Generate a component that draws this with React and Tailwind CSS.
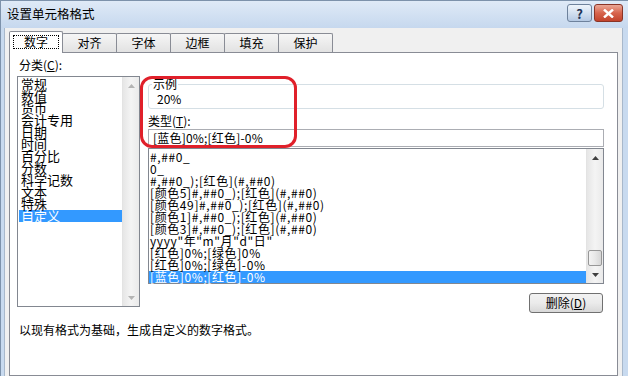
import React from 'react';

const categories = ['常规', '数值', '货币', '会计专用', '日期', '时间', '百分比', '分数', '科学记数', '文本', '特殊', '自定义'];

const formats = [
  '#,##0_',
  '0_',
  '#,##0_);[红色](#,##0)',
  '[颜色5]#,##0_);[红色](#,##0)',
  '[颜色49]#,##0_);[红色](#,##0)',
  '[颜色1]#,##0_);[红色](#,##0)',
  '[颜色3]#,##0_);[红色](#,##0)',
  'yyyy"年"m"月"d"日"',
  '[红色]0%;[绿色]0%',
  '[红色]0%;[绿色]-0%',
  '[蓝色]0%;[红色]-0%',
];

const tabs = ['数字', '对齐', '字体', '边框', '填充', '保护'];

function Arrow({ up, color }) {
  return (
    <svg width="7" height="4" viewBox="0 0 7 4">
      <path d={up ? 'M3.5 0L7 4H0z' : 'M0 0H7L3.5 4z'} fill={color} />
    </svg>
  );
}

// vertical scrollbar, thumb sits at the bottom of the track when given
function ScrollBar({ thumb, disabled }) {
  const c = disabled ? '#b4b4b4' : '#404040';
  return (
    <div className="w-[17px] flex flex-col bg-gradient-to-r from-[#e6e6e6] via-[#f4f4f4] to-[#eaeaea] border-l border-[#e3e3e3]">
      <div className="h-[17px] flex items-center justify-center">
        <Arrow up color={c} />
      </div>
      <div className="flex-1 flex flex-col justify-end px-[1px]">
        {thumb && (
          <div className="h-[16px] rounded-[2px] border border-[#979797] bg-gradient-to-r from-[#f3f3f3] via-[#e8e8e8] to-[#d6d6d6]" />
        )}
      </div>
      <div className="h-[17px] flex items-center justify-center">
        <Arrow color={c} />
      </div>
    </div>
  );
}

export default function App() {
  return (
    <div className="w-[628px] h-[376px] overflow-hidden flex flex-col bg-[#c8daef] font-['Noto_Sans_CJK_SC',sans-serif] text-[12px] text-black">
      {/* title bar */}
      <div className="h-[28px] flex items-start justify-between bg-gradient-to-b from-[#dfeaf7] to-[#c6d8ee] border-t border-l border-[#7d92ab]">
        <div className="pl-[6px] pt-[6px] leading-[14px] text-[12.5px]">设置单元格格式</div>
        <div className="flex gap-[2px] pt-[3px] pr-[5px]">
          <div className="w-[25px] h-[18px] rounded-[3px] border border-[#6e829c] bg-gradient-to-b from-[#eef4fb] via-[#d3e0f0] to-[#b5c9e3] flex items-center justify-center text-[#1d3456] font-bold text-[13px] leading-none">
            ?
          </div>
          <div className="w-[29px] h-[18px] rounded-[3px] border border-[#8a3426] bg-gradient-to-b from-[#eaa796] via-[#d7644d] to-[#c2432c] flex items-center justify-center">
            <svg width="11" height="9" viewBox="0 0 11 9">
              <path d="M1 0.5L10 8.5M10 0.5L1 8.5" stroke="#fff" strokeWidth="2.4" />
            </svg>
          </div>
        </div>
      </div>

      <div className="flex-1 flex border-l border-[#7d92ab]">
        <div className="w-[3px]" />
        {/* client area */}
        <div className="flex-1 bg-[#f0f0f0] border-l border-r border-[#a8b8cb] flex flex-col pl-[4px] pr-[4px] pt-[3px]">
          {/* tabs */}
          <div className="flex items-end h-[21px]">
            {tabs.map((t, i) =>
              i === 0 ? (
                <div key={t} className="w-[54px] bg-white border border-b-0 border-[#898c95] rounded-t-[2px] relative z-10 -mb-[1px] h-[22px] px-[3px] pt-[3px]">
                  <div className="h-[14px] border border-dotted border-black flex items-center justify-center leading-[12px]">{t}</div>
                </div>
              ) : (
                <div key={t} className="w-[55px] -ml-[1px] h-[19px] bg-gradient-to-b from-[#f6f6f6] to-[#e2e2e2] border border-b-0 border-[#898c95] rounded-t-[2px] flex items-center justify-center leading-[14px]">
                  {t}
                </div>
              )
            )}
          </div>

          {/* tab page */}
          <div className="flex-1 bg-white border border-[#898c95] relative px-[7px] pt-[5px]">
            <div className="flex items-start gap-[8px]">
              {/* left column */}
              <div className="w-[123px] flex flex-col">
                <div className="pl-[2px] h-[14px] leading-[14px]">
                  分类(<span className="underline">C</span>):
                </div>
                <div className="mt-[4px] h-[231px] border border-[#828790] flex">
                  <div className="flex-1 pt-[1px] pl-[1px] text-[13px] leading-[12px]">
                    {categories.map((c, i) => (
                      <div key={c} className={`h-[12px] pl-[2px] ${i === categories.length - 1 ? 'bg-[#3399ff] text-white' : ''}`}>
                        {c}
                      </div>
                    ))}
                  </div>
                  <ScrollBar disabled />
                </div>
              </div>

              {/* right column */}
              <div className="flex-1 mr-[6px] flex flex-col mt-[19px]">
                <fieldset className="border border-[#d5dfe5] rounded-[3px] px-[5px] pb-0 h-[32px]">
                  <legend className="px-[1px] leading-[14px] ml-[-2px]">示例</legend>
                  <div className="pl-[3px] pt-[1px] leading-[14px]">20%</div>
                </fieldset>
                <div className="mt-[5px] h-[14px] leading-[14px]">
                  类型(<span className="underline">T</span>):
                </div>
                <div className="mt-[1px] h-[18px] border border-[#abadb3] pl-[4px] leading-[16px] tracking-[0.2px] flex items-center">
                  [蓝色]0%;[红色]-0%
                </div>
                <div className="mt-[1px] h-[136px] border border-[#828790] flex">
                  <div className="flex-1 pt-[2px] tracking-[0.6px]">
                    {formats.map((f, i) => (
                      <div key={f} className={`h-[12px] leading-[12px] pl-[1px] ${i === formats.length - 1 ? 'bg-[#3399ff] text-white' : ''}`}>
                        {f}
                      </div>
                    ))}
                  </div>
                  <ScrollBar thumb />
                </div>
                <div className="mt-[9px] self-end mr-[1px] w-[74px] h-[20px] rounded-[3px] border border-[#707070] bg-gradient-to-b from-[#f2f2f2] via-[#ebebeb] to-[#d8d8d8] flex items-center justify-center leading-[14px]">
                  删除(<span className="underline">D</span>)
                </div>
              </div>
            </div>

            <div className="mt-[10px] pl-[2px] leading-[14px]">以现有格式为基础，生成自定义的数字格式。</div>

            {/* red annotation */}
            <div className="absolute left-[130px] top-[23px] w-[157px] h-[72px] border-[3px] border-[#e0202a] rounded-[12px]" />
          </div>
        </div>
        <div className="w-[5px]" />
      </div>
    </div>
  );
}
